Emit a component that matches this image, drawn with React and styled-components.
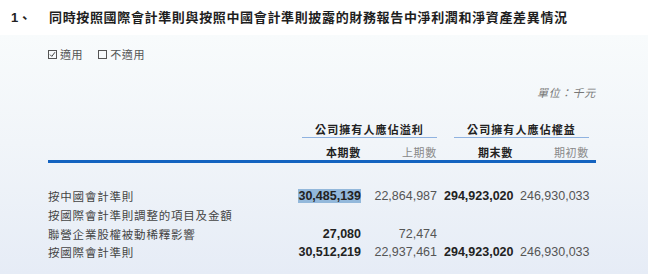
import React from 'react';
import styled, { createGlobalStyle } from 'styled-components';

const GlobalStyle = createGlobalStyle`
  html, body {
    margin: 0;
    padding: 0;
    height: 100%;
  }
  body {
    font-family: "Noto Sans CJK TC", "Liberation Sans", sans-serif;
    color: #333;
  }
`;

const rows = [
  { label: '按中國會計準則', cur: '30,485,139', prev: '22,864,987', end: '294,923,020', start: '246,930,033', mark: true },
  { label: '按國際會計準則調整的項目及金額' },
  { label: '聯營企業股權被動稀釋影響', cur: '27,080', prev: '72,474' },
  { label: '按國際會計準則', cur: '30,512,219', prev: '22,937,461', end: '294,923,020', start: '246,930,033' },
];

const App = () => {
  return (
    <Page>
      <GlobalStyle />
      <TitleBar>
        <Index>1、</Index>
        <Title>同時按照國際會計準則與按照中國會計準則披露的財務報告中淨利潤和淨資產差異情況</Title>
      </TitleBar>

      <Content>
        <Options>
          <Option>
            <Box>
              <svg width="7" height="7" viewBox="0 0 7 7">
                <path d="M1 3.6 L2.8 5.4 L6 1.2" fill="none" stroke="#444" strokeWidth="1" />
              </svg>
            </Box>
            適用
          </Option>
          <Option>
            <Box />
            不適用
          </Option>
        </Options>

        <Unit>單位：千元</Unit>

        <Table>
          <colgroup>
            <col style={{ width: 244 }} />
            <col style={{ width: 76 }} />
            <col style={{ width: 76 }} />
            <col style={{ width: 76 }} />
            <col style={{ width: 76 }} />
          </colgroup>
          <thead>
            <tr>
              <th />
              <GroupHead colSpan={2}><GroupLabel>公司擁有人應佔溢利</GroupLabel></GroupHead>
              <GroupHead colSpan={2}><GroupLabel>公司擁有人應佔權益</GroupLabel></GroupHead>
            </tr>
            <tr>
              <SubHead />
              <SubHead $strong>本期數</SubHead>
              <SubHead>上期數</SubHead>
              <SubHead $strong>期末數</SubHead>
              <SubHead>期初數</SubHead>
            </tr>
          </thead>
          <tbody>
            <Spacer><td colSpan={5} /></Spacer>
            {rows.map((r) => (
              <Row key={r.label}>
                <Label>{r.label}</Label>
                <Num $strong>{r.mark ? <Mark>{r.cur}</Mark> : r.cur}</Num>
                <Num>{r.prev}</Num>
                <Num $strong>{r.end}</Num>
                <Num>{r.start}</Num>
              </Row>
            ))}
          </tbody>
        </Table>
      </Content>
    </Page>
  );
};

const Page = styled.div`
  min-height: 100vh;
  display: flex;
  flex-direction: column;
`;

const TitleBar = styled.div`
  height: 35px;
  background: #fff;
  display: flex;
  align-items: center;
  padding-bottom: 3px;
  box-sizing: border-box;
`;

const Index = styled.span`
  width: 38px;
  padding-left: 11px;
  font-family: "Liberation Sans", "Noto Sans CJK TC", sans-serif;
  font-weight: 700;
  font-size: 13px;
  color: #222;
`;

const Title = styled.h1`
  margin: 0;
  font-size: 13px;
  font-weight: 700;
  letter-spacing: 0.65px;
  color: #1e1e1e;
`;

const Content = styled.div`
  flex: 1;
  padding: 11px 52px 0 48px;
  background: linear-gradient(180deg, #f8fbfc 0%, #f1f5f9 45%, #e6ecf6 100%);
`;

const Options = styled.div`
  display: flex;
  gap: 15px;
  height: 16px;
  align-items: center;
`;

const Option = styled.span`
  display: flex;
  align-items: center;
  gap: 3px;
  font-size: 11px;
  letter-spacing: 0.6px;
  color: #555;
`;

const Box = styled.span`
  width: 7px;
  height: 7px;
  border: 1px solid #555;
  display: flex;
  align-items: center;
  justify-content: center;
  margin-top: 1px;
`;

const Unit = styled.div`
  margin-top: 22px;
  height: 16px;
  line-height: 16px;
  text-align: right;
  font-size: 11px;
  font-style: italic;
  letter-spacing: 0.8px;
  color: #777;
`;

const Table = styled.table`
  margin-top: 21px;
  width: 548px;
  border-collapse: collapse;
  table-layout: fixed;
`;

const GroupHead = styled.th`
  padding: 0;
  font-weight: 700;
`;

const GroupLabel = styled.div`
  margin: 0 7px 0 10px;
  height: 16px;
  line-height: 16px;
  border-bottom: 1.5px solid #8fb2e0;
  text-align: center;
  font-size: 11px;
  letter-spacing: 1.1px;
  color: #222;
`;

const SubHead = styled.th`
  padding: 6px 7px 0 0;
  height: 16px;
  line-height: 16px;
  text-align: right;
  font-size: 11px;
  letter-spacing: 0.7px;
  font-weight: ${(p) => (p.$strong ? 700 : 400)};
  color: ${(p) => (p.$strong ? '#222' : '#888')};
  border-bottom: 3px solid #1463c0;
`;

const Spacer = styled.tr`
  td {
    height: 24px;
    padding: 0;
  }
`;

const Row = styled.tr`
  height: 18.7px;
`;

const Label = styled.td`
  padding: 0;
  font-size: 11.5px;
  letter-spacing: 0.8px;
  color: #444;
  white-space: nowrap;
`;

const Num = styled.td`
  padding: 0 7px 0 0;
  text-align: right;
  font-family: "Liberation Sans", sans-serif;
  font-size: 12.5px;
  white-space: nowrap;
  font-weight: ${(p) => (p.$strong ? 700 : 400)};
  color: ${(p) => (p.$strong ? '#222' : '#555')};
`;

const Mark = styled.span`
  background: #93b8db;
`;

export default App;
